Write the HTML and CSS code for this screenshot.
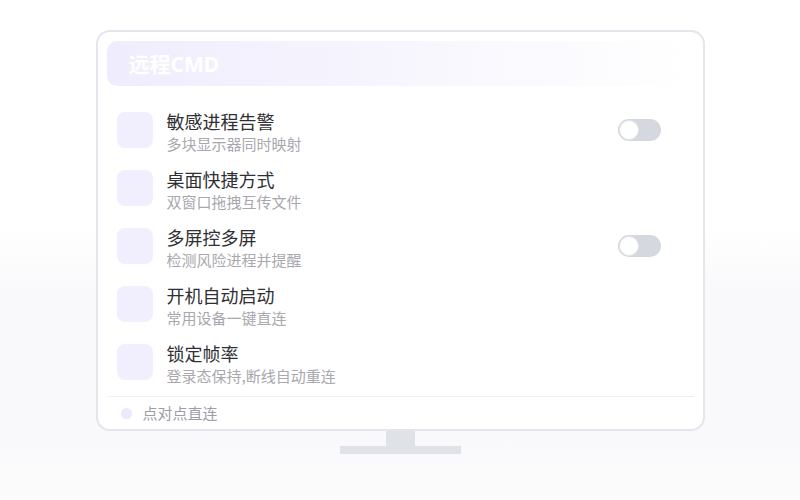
FILE: index.html
```html
<!DOCTYPE html>
<html lang="zh-CN">
<head>
<meta charset="utf-8">
<title>远程CMD</title>
<link rel="stylesheet" href="styles.css">
</head>
<body>
<div class="scene">
  <div class="monitor">
    <div class="header">
      <span class="title">远程CMD</span>
      <span class="status">已连接</span>
    </div>
    <div class="list">
      <div class="row">
        <div class="icon"></div>
        <div class="text"><div class="name">敏感进程告警</div><div class="desc">多块显示器同时映射</div></div>
        <div class="toggle"><span class="knob"></span></div>
      </div>
      <div class="row">
        <div class="icon"></div>
        <div class="text"><div class="name">桌面快捷方式</div><div class="desc">双窗口拖拽互传文件</div></div>
      </div>
      <div class="row">
        <div class="icon"></div>
        <div class="text"><div class="name">多屏控多屏</div><div class="desc">检测风险进程并提醒</div></div>
        <div class="toggle"><span class="knob"></span></div>
      </div>
      <div class="row">
        <div class="icon"></div>
        <div class="text"><div class="name">开机自动启动</div><div class="desc">常用设备一键直连</div></div>
      </div>
      <div class="row">
        <div class="icon"></div>
        <div class="text"><div class="name">锁定帧率</div><div class="desc">登录态保持,断线自动重连</div></div>
      </div>
    </div>
    <div class="divider"></div>
    <div class="footer">
      <span class="dot"></span>
      <span class="foot-text">点对点直连</span>
    </div>
  </div>
  <div class="neck"></div>
  <div class="base"></div>
</div>
</body>
</html>
```
FILE: styles.css
```css
* { box-sizing: border-box; }
html, body {
  margin: 0;
  padding: 0;
  width: 800px;
  height: 500px;
  overflow: hidden;
}
body {
  font-family: "Noto Sans CJK SC", "Noto Sans", sans-serif;
  background: linear-gradient(180deg, #ffffff 0%, #ffffff 46%, #f9f9fb 58%, #f9f9fb 88%, #fcfcfd 100%);
}
.scene {
  display: flex;
  flex-direction: column;
  align-items: center;
  padding-top: 30px;
}
.monitor {
  width: 609px;
  height: 401px;
  border: 2px solid #e3e6eb;
  border-radius: 14px;
  background: #ffffff;
  padding: 9px 9px 0 9px;
  display: flex;
  flex-direction: column;
}
.header {
  height: 45px;
  border-radius: 10px;
  background: linear-gradient(90deg, #efedfd 0%, #f6f5fe 45%, #ffffff 100%);
  display: flex;
  align-items: center;
  justify-content: space-between;
  padding: 0 16px 0 22px;
}
.title {
  color: #ffffff;
  font-family: "Noto Sans", "Noto Sans CJK SC", sans-serif;
  font-size: 21px;
  font-weight: 700;
  line-height: 24px;
}
.status {
  color: #ffffff;
  font-size: 14px;
  line-height: 18px;
}
.list {
  margin-top: 15px;
  display: flex;
  flex-direction: column;
}
.row {
  height: 58px;
  display: flex;
  align-items: center;
  padding: 0 33px 0 10px;
  gap: 14px;
}
.icon {
  width: 36px;
  height: 36px;
  border-radius: 8px;
  background: #f1effd;
  flex: none;
}
.text {
  display: flex;
  flex-direction: column;
  padding-top: 3px;
}
.name {
  font-size: 18px;
  line-height: 23px;
  color: #303034;
}
.desc {
  font-size: 15px;
  line-height: 21px;
  color: #a8a8ae;
}
.toggle {
  margin-left: auto;
  width: 43px;
  height: 22px;
  border-radius: 11px;
  background: #d5d8df;
  display: flex;
  align-items: center;
  padding-left: 1px;
}
.knob {
  width: 20px;
  height: 20px;
  border-radius: 50%;
  background: #ffffff;
  border: 1px solid #e2e4e9;
}
.divider {
  margin-top: 5px;
  height: 1px;
  background: #eeeff2;
}
.footer {
  height: 32px;
  display: flex;
  align-items: center;
  padding-left: 14px;
  gap: 11px;
}
.dot {
  width: 11px;
  height: 11px;
  border-radius: 50%;
  background: #ece9fb;
}
.foot-text {
  font-size: 15px;
  line-height: 20px;
  color: #9d9da5;
}
.neck {
  width: 29px;
  height: 15px;
  background: #dfe2e7;
}
.base {
  width: 121px;
  height: 8px;
  background: #dfe2e7;
}
```
